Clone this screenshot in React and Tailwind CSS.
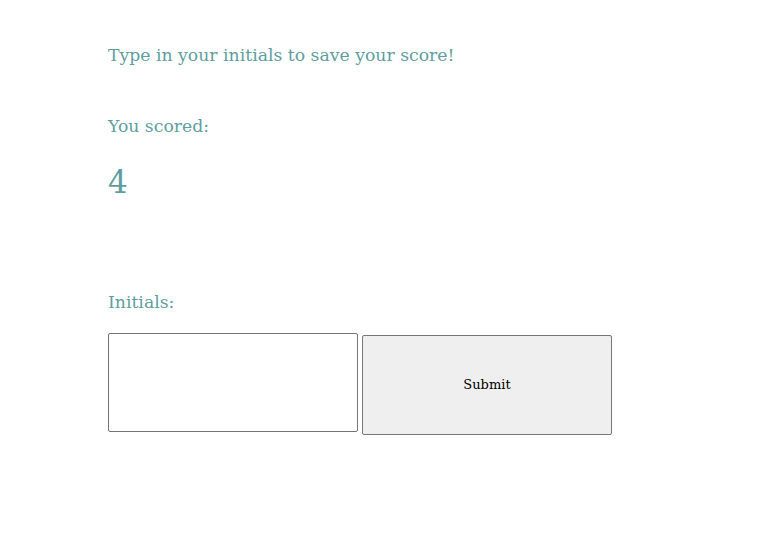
export default function App() {
  return (
    <div className="min-h-[553px] bg-white pl-[108px] pt-[43px] text-[#5f9ea0]" style={{ fontFamily: '"DejaVu Serif", serif' }}>
      <p className="text-[17.25px] leading-[24px]">Type in your initials to save your score!</p>
      <p className="mt-[47px] text-[17.25px] leading-[24px]">You scored:</p>
      <p className="mt-[24px] text-[31px] leading-[40px]">4</p>
      <p className="mt-[88px] text-[17.25px] leading-[24px]">Initials:</p>
      <div className="mt-[19px] flex items-start gap-[4px]">
        <input type="text" className="h-[99px] w-[250px] rounded-[2px] border border-[#767676] bg-white" />
        <button className="mt-[2px] h-[100px] w-[250px] rounded-[2px] border border-[#767676] bg-[#efefef] text-[13px] text-black">Submit</button>
      </div>
    </div>
  );
}
